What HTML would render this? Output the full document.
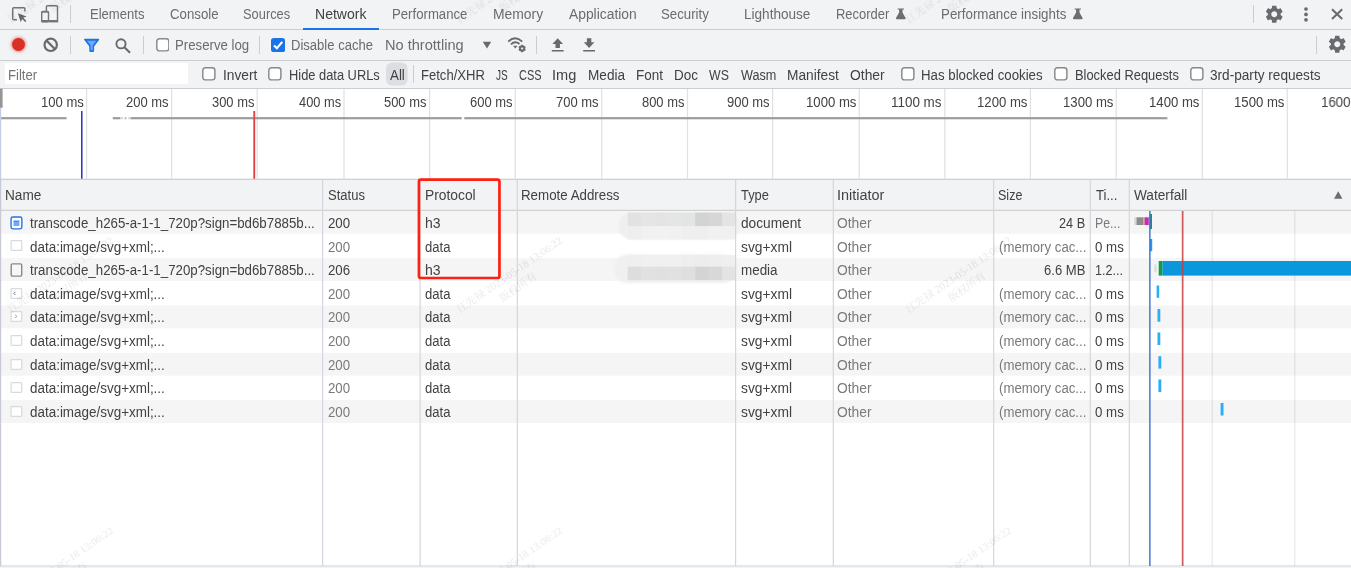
<!DOCTYPE html>
<html lang="en">
<head>
<meta charset="utf-8">
<title>DevTools - Network</title>
<style>
html,body{margin:0;padding:0;}
body{width:1351px;height:568px;position:relative;overflow:hidden;background:#fff;
  font-family:"Liberation Sans",sans-serif;font-size:13.800px;line-height:16px;color:#333;}
.abs,.t,svg,.cb,.vd{position:absolute;}
.t{white-space:pre;line-height:16px;font-size:13.800px;transform-origin:0 50%;}
.bar{position:absolute;left:0;width:1351px;background:#f1f3f4;}
.hl{position:absolute;left:0;width:1351px;height:1px;background:#cbcdd1;}
.vd{width:1px;background:#cbcdd1;}
.cb{width:11px;height:11px;border:1.4px solid #767676;border-radius:3px;background:#fff;}
.row{position:absolute;left:0;width:1351px;background:#f5f5f5;}
.col{position:absolute;width:1px;background:#d4d7dd;}
.g{position:absolute;width:1px;background:#e3e3e3;}
.wf{position:absolute;}
.wm{position:absolute;width:200px;height:30.600px;line-height:15.300px;text-align:center;font-family:"Liberation Serif","Noto Serif CJK SC",serif;font-size:10.700px;color:rgba(0,0,0,.1);transform:rotate(-34.600deg);transform-origin:50% 50%;white-space:nowrap;pointer-events:none;}
</style>
</head>
<body>
<!-- ============ backgrounds ============ -->
<div class="bar" style="top:0;height:29px;"></div>
<div class="hl" style="top:29px;"></div>
<div class="bar" style="top:30px;height:30px;"></div>
<div class="hl" style="top:60px;"></div>
<div class="bar" style="top:61px;height:27px;"></div>
<div class="hl" style="top:88px;"></div>
<!-- ============ table ============ -->
<div class="bar" style="top:179px;height:31px;"></div>
<svg style="left:0;top:0;" width="1351" height="568" viewBox="0 0 1351 568"><rect x="0" y="210.80" width="1351" height="22.85" fill="#f5f5f5"/>
<rect x="0" y="258.14" width="1351" height="22.85" fill="#f5f5f5"/>
<rect x="0" y="305.48" width="1351" height="22.85" fill="#f5f5f5"/>
<rect x="0" y="352.82" width="1351" height="22.85" fill="#f5f5f5"/>
<rect x="0" y="400.16" width="1351" height="22.85" fill="#f5f5f5"/></svg>
<svg style="left:600px;top:205px;" width="145" height="84" viewBox="0 0 145 84">
<defs><filter id="bl" x="-10%" y="-30%" width="120%" height="160%"><feGaussianBlur stdDeviation="1"/></filter>
<filter id="bs" x="-5%" y="-20%" width="110%" height="140%"><feGaussianBlur stdDeviation="0.600"/></filter></defs>
<rect x="18.700" y="7.300" width="120.300" height="27.100" rx="13" fill="#efefef" filter="url(#bl)"/>
<rect x="14" y="49.500" width="123" height="28.500" rx="13.500" fill="#f0f0f0" filter="url(#bl)"/>
<g filter="url(#bs)">
<rect x="27.7" y="7.6" width="13.8" height="13.6" fill="#e2e2e2"/><rect x="41.2" y="7.6" width="13.8" height="13.6" fill="#e5e5e5"/><rect x="54.7" y="7.6" width="13.8" height="13.6" fill="#e4e4e4"/><rect x="68.2" y="7.6" width="13.8" height="13.6" fill="#e5e5e5"/><rect x="81.7" y="7.6" width="13.8" height="13.6" fill="#e3e5e5"/><rect x="95.2" y="7.6" width="13.8" height="13.6" fill="#d3d3d3"/><rect x="108.7" y="7.6" width="13.8" height="13.6" fill="#d6d6d6"/><rect x="122.2" y="7.6" width="13.8" height="13.6" fill="#e4e4e4"/>
<rect x="27.7" y="21.2" width="13.8" height="13.2" fill="#eeeeee"/><rect x="41.2" y="21.2" width="13.8" height="13.2" fill="#f1f1f1"/><rect x="54.7" y="21.2" width="13.8" height="13.2" fill="#f2f2f2"/><rect x="68.2" y="21.2" width="13.8" height="13.2" fill="#f1f1f1"/><rect x="81.7" y="21.2" width="13.8" height="13.2" fill="#efefef"/><rect x="95.2" y="21.2" width="13.8" height="13.2" fill="#eeeeee"/><rect x="108.7" y="21.2" width="13.8" height="13.2" fill="#f1f1f1"/><rect x="122.2" y="21.2" width="13.8" height="13.2" fill="#f0f0f0"/>
<rect x="27.7" y="50" width="13.8" height="11.6" fill="#efefef"/><rect x="41.2" y="50" width="13.8" height="11.6" fill="#f0f0f0"/><rect x="54.7" y="50" width="13.8" height="11.6" fill="#f0f0f0"/><rect x="68.2" y="50" width="13.8" height="11.6" fill="#f0f0f0"/><rect x="81.7" y="50" width="13.8" height="11.6" fill="#eeeeee"/><rect x="95.2" y="50" width="13.8" height="11.6" fill="#ededed"/><rect x="108.7" y="50" width="13.8" height="11.6" fill="#eeeeee"/><rect x="122.2" y="50" width="13.8" height="11.6" fill="#efefef"/>
<rect x="27.7" y="61.6" width="13.8" height="13.6" fill="#dddddd"/><rect x="41.2" y="61.6" width="13.8" height="13.6" fill="#e1e1e1"/><rect x="54.7" y="61.6" width="13.8" height="13.6" fill="#e0e0e0"/><rect x="68.2" y="61.6" width="13.8" height="13.6" fill="#e1e1e1"/><rect x="81.7" y="61.6" width="13.8" height="13.6" fill="#dfdfdf"/><rect x="95.2" y="61.6" width="13.8" height="13.6" fill="#d4d4d4"/><rect x="108.7" y="61.6" width="13.8" height="13.6" fill="#d8d8d8"/><rect x="122.2" y="61.6" width="13.8" height="13.6" fill="#e3e3e3"/>
</g></svg>
<svg style="left:0;top:0;" width="1351" height="568" viewBox="0 0 1351 568"><rect x="0.00" y="178.70" width="1351.00" height="1.20" fill="#cbcdd1"/>
<rect x="0.00" y="209.80" width="1351.00" height="1.10" fill="#cbcdd1"/>
<rect x="86.00" y="89.00" width="1.20" height="89.70" fill="#e0e0e0"/>
<rect x="171.00" y="89.00" width="1.20" height="89.70" fill="#e0e0e0"/>
<rect x="256.60" y="89.00" width="1.20" height="89.70" fill="#e0e0e0"/>
<rect x="343.40" y="89.00" width="1.20" height="89.70" fill="#e0e0e0"/>
<rect x="429.00" y="89.00" width="1.20" height="89.70" fill="#e0e0e0"/>
<rect x="514.60" y="89.00" width="1.20" height="89.70" fill="#e0e0e0"/>
<rect x="601.10" y="89.00" width="1.20" height="89.70" fill="#e0e0e0"/>
<rect x="686.90" y="89.00" width="1.20" height="89.70" fill="#e0e0e0"/>
<rect x="772.00" y="89.00" width="1.20" height="89.70" fill="#e0e0e0"/>
<rect x="858.60" y="89.00" width="1.20" height="89.70" fill="#e0e0e0"/>
<rect x="944.20" y="89.00" width="1.20" height="89.70" fill="#e0e0e0"/>
<rect x="1029.80" y="89.00" width="1.20" height="89.70" fill="#e0e0e0"/>
<rect x="1115.60" y="89.00" width="1.20" height="89.70" fill="#e0e0e0"/>
<rect x="1201.70" y="89.00" width="1.20" height="89.70" fill="#e0e0e0"/>
<rect x="1286.70" y="89.00" width="1.20" height="89.70" fill="#e0e0e0"/>
<rect x="0.00" y="117.10" width="66.60" height="2.20" fill="#9c9c9c"/>
<rect x="112.80" y="117.10" width="7.20" height="2.20" fill="#9c9c9c"/>
<rect x="130.40" y="117.10" width="331.30" height="2.20" fill="#9c9c9c"/>
<rect x="464.30" y="117.10" width="703.10" height="2.20" fill="#9c9c9c"/>
<rect x="120.00" y="117.10" width="3.00" height="2.20" fill="#d8d8d8"/>
<rect x="124.50" y="117.10" width="2.00" height="2.20" fill="#bdbdbd"/>
<rect x="128.00" y="117.10" width="2.40" height="2.20" fill="#dcdcdc"/>
<rect x="0.00" y="88.70" width="2.60" height="19.10" fill="#969696"/>
<rect x="81.00" y="111.00" width="1.55" height="67.70" fill="#3038c0"/>
<rect x="253.30" y="111.00" width="1.90" height="67.70" fill="#e04444"/>
<rect x="1211.60" y="211.00" width="1.20" height="355.00" fill="rgba(0,0,0,.09)"/>
<rect x="1294.20" y="211.00" width="1.20" height="355.00" fill="rgba(0,0,0,.09)"/>
<rect x="322.00" y="180.00" width="1.20" height="386.00" fill="#d3d6dc"/>
<rect x="419.50" y="180.00" width="1.20" height="386.00" fill="#d3d6dc"/>
<rect x="516.70" y="180.00" width="1.20" height="386.00" fill="#d3d6dc"/>
<rect x="735.00" y="180.00" width="1.20" height="386.00" fill="#d3d6dc"/>
<rect x="832.70" y="180.00" width="1.20" height="386.00" fill="#d3d6dc"/>
<rect x="993.10" y="180.00" width="1.20" height="386.00" fill="#d3d6dc"/>
<rect x="1089.70" y="180.00" width="1.20" height="386.00" fill="#d3d6dc"/>
<rect x="1128.70" y="180.00" width="1.20" height="386.00" fill="#d3d6dc"/>
<rect x="0.00" y="108.00" width="1.20" height="71.00" fill="#c2cee6"/>
<rect x="0.00" y="179.00" width="1.20" height="387.00" fill="#c6cad2"/>
<rect x="0.00" y="565.50" width="1351.00" height="1.10" fill="#cbcdd1"/>
<rect x="0.00" y="566.60" width="1351.00" height="1.40" fill="#f1f3f4"/>
<rect x="1134.30" y="217.30" width="2.20" height="7.70" fill="#d8d8d8"/>
<rect x="1136.50" y="217.30" width="6.80" height="7.70" fill="#8c8c8c"/>
<rect x="1143.30" y="217.30" width="1.30" height="7.70" fill="#e8952c"/>
<rect x="1144.60" y="217.30" width="4.20" height="7.70" fill="#c22bc4"/>
<rect x="1149.80" y="214.00" width="2.20" height="15.00" fill="#0f9d48"/>
<rect x="1150.00" y="239.00" width="2.20" height="12.20" fill="#1a9df2"/>
<rect x="1154.30" y="264.40" width="2.20" height="7.80" fill="#dcdcdc"/>
<rect x="1158.70" y="261.00" width="3.80" height="14.60" fill="#0f9d48"/>
<rect x="1162.50" y="261.00" width="188.50" height="14.60" fill="#0b97dc"/>
<rect x="1156.60" y="285.50" width="2.60" height="12.30" fill="#2aaef5"/>
<rect x="1157.50" y="309.00" width="2.80" height="12.70" fill="#2aaef5"/>
<rect x="1157.50" y="332.50" width="2.80" height="12.50" fill="#2aaef5"/>
<rect x="1158.40" y="356.20" width="2.90" height="12.40" fill="#2aaef5"/>
<rect x="1158.40" y="379.50" width="2.90" height="12.50" fill="#2aaef5"/>
<rect x="1220.60" y="403.00" width="2.90" height="12.50" fill="#2aaef5"/>
<rect x="1149.00" y="211.00" width="1.70" height="355.00" fill="rgba(58,116,214,.85)"/>
<rect x="1181.80" y="211.00" width="1.70" height="355.00" fill="rgba(200,64,66,.85)"/>
<rect x="418.950" y="179.600" width="80.500" height="98.400" rx="2" fill="none" stroke="#fc2112" stroke-width="2.700"/>
<path d="M1338.2 191.2L1342.4 198.7H1334Z" fill="#6e6e6e"/></svg>
<svg style="left:9.500px;top:215.500px;" width="13" height="14" viewBox="0 0 13 14"><rect x="1.050" y="0.950" width="10.800" height="11.900" rx="1.800" fill="#fff" stroke="#1a73e8" stroke-width="1.350"/><path d="M3.500 5.200H9.400M3.500 7.100H9.400M3.500 9H9.400" stroke="#4a8bf0" stroke-width="1.500"/></svg>
<svg style="left:9.500px;top:263px;" width="13" height="14" viewBox="0 0 13 14"><rect x="1.200" y="0.9" width="10.500" height="12.200" rx="1.300" fill="#f7f7f7" stroke="#858a91" stroke-width="1.400"/></svg>
<svg style="left:9.500px;top:240.40px;" width="13" height="12" viewBox="0 0 13 12"><rect x="1.100" y="0.700" width="10.600" height="9.600" rx="0.600" fill="#fff" stroke="#d7dbe1" stroke-width="1.250"/></svg>
<svg style="left:9.500px;top:287.74px;" width="13" height="12" viewBox="0 0 13 12"><rect x="1.100" y="0.700" width="10.600" height="9.600" rx="0.600" fill="#fff" stroke="#d7dbe1" stroke-width="1.250"/><path d="M5.400 3.800L3.800 5.400L5.400 7" stroke="#666" stroke-width="0.9" fill="none"/></svg>
<svg style="left:9.500px;top:311.41px;" width="13" height="12" viewBox="0 0 13 12"><rect x="1.100" y="0.700" width="10.600" height="9.600" rx="0.600" fill="#fff" stroke="#d7dbe1" stroke-width="1.250"/><path d="M5.200 3.800L6.800 5.400L5.200 7" stroke="#888" stroke-width="0.9" fill="none"/></svg>
<svg style="left:9.500px;top:335.08px;" width="13" height="12" viewBox="0 0 13 12"><rect x="1.100" y="0.700" width="10.600" height="9.600" rx="0.600" fill="#fff" stroke="#d7dbe1" stroke-width="1.250"/></svg>
<svg style="left:9.500px;top:358.75px;" width="13" height="12" viewBox="0 0 13 12"><rect x="1.100" y="0.700" width="10.600" height="9.600" rx="0.600" fill="#fff" stroke="#d7dbe1" stroke-width="1.250"/></svg>
<svg style="left:9.500px;top:382.42px;" width="13" height="12" viewBox="0 0 13 12"><rect x="1.100" y="0.700" width="10.600" height="9.600" rx="0.600" fill="#fff" stroke="#d7dbe1" stroke-width="1.250"/></svg>
<svg style="left:9.500px;top:406.09px;" width="13" height="12" viewBox="0 0 13 12"><rect x="1.100" y="0.700" width="10.600" height="9.600" rx="0.600" fill="#fff" stroke="#d7dbe1" stroke-width="1.250"/></svg>
<!-- ============ tab bar ============ -->
<div class="abs" style="left:303px;top:28px;width:76px;height:2px;background:#1a73e8;"></div>
<!-- inspect icon -->
<svg style="left:11px;top:6px;" width="17" height="17" viewBox="0 0 17 17" fill="none">
  <path d="M5.900 13.800H2.700Q1.700 13.800 1.700 12.800V2.700Q1.700 1.700 2.700 1.700H12.900Q13.900 1.700 13.900 2.700V5.600" stroke="#72757a" stroke-width="1.500"/>
  <path d="M6.900 7.200L15.600 10.500L12.300 11.800L15.400 14.900L14.200 16.100L11.100 13L9.800 16.200Z" fill="#63666a"/>
</svg>
<!-- device icon -->
<svg style="left:40px;top:4px;" width="19" height="19" viewBox="0 0 19 19" fill="none">
  <path d="M6.4 7V2.6Q6.4 1.7 7.3 1.7H16.6Q17.5 1.7 17.5 2.6V17.6H9.2" stroke="#72757a" stroke-width="1.4"/>
  <rect x="1.7" y="7.4" width="6.8" height="10.4" rx="1" stroke="#72757a" stroke-width="1.4"/>
  <rect x="1.4" y="16" width="16.6" height="2.2" fill="#72757a"/>
  <rect x="1.700" y="7" width="6.800" height="1.700" fill="#72757a"/>
</svg>
<div class="vd" style="left:70px;top:5px;height:18px;"></div>
<!-- flasks -->
<svg style="left:894.800px;top:8px;" width="12" height="12" viewBox="0 0 12 12"><path d="M2.600 0.600H9V1.500H7.500V4.600L10.600 10.100Q11 11.200 9.800 11.200H1.800Q0.600 11.200 1 10.100L4.100 4.600V1.500H2.600Z" fill="#6e6e6e"/></svg>
<svg style="left:1072.200px;top:8px;" width="12" height="12" viewBox="0 0 12 12"><path d="M2.600 0.600H9V1.500H7.500V4.600L10.600 10.100Q11 11.200 9.800 11.200H1.800Q0.600 11.200 1 10.100L4.100 4.600V1.500H2.600Z" fill="#6e6e6e"/></svg>
<div class="vd" style="left:1253px;top:5px;height:18px;"></div>
<!-- gear -->
<svg style="left:1263.700px;top:3.700px;" width="20.500" height="20.500" viewBox="0 0 24 24"><path fill="#676a6e" d="M19.43 12.98c.04-.32.07-.64.07-.98s-.03-.66-.07-.98l2.11-1.65c.19-.15.24-.42.12-.64l-2-3.46c-.12-.22-.39-.3-.61-.22l-2.49 1c-.52-.4-1.08-.73-1.69-.98l-.38-2.65C14.46 2.18 14.25 2 14 2h-4c-.25 0-.46.18-.49.42l-.38 2.65c-.61.25-1.17.59-1.69.98l-2.49-1c-.23-.09-.49 0-.61.22l-2 3.46c-.13.22-.07.49.12.64l2.11 1.65c-.04.32-.07.65-.07.98s.03.66.07.98l-2.11 1.65c-.19.15-.24.42-.12.64l2 3.46c.12.22.39.3.61.22l2.49-1c.52.4 1.08.73 1.69.98l.38 2.65c.03.24.24.42.49.42h4c.25 0 .46-.18.49-.42l.38-2.65c.61-.25 1.17-.59 1.69-.98l2.49 1c.23.09.49 0 .61-.22l2-3.46c.12-.22.07-.49-.12-.64l-2.11-1.65zM12 15.5c-1.93 0-3.500-1.570-3.500-3.500s1.570-3.500 3.500-3.500 3.500 1.570 3.500 3.500-1.570 3.500-3.500 3.500z"/></svg>
<!-- dots -->
<svg style="left:1303px;top:6px;" width="6" height="17" viewBox="0 0 6 17"><circle cx="3" cy="3" r="1.850" fill="#676a6e"/><circle cx="3" cy="8.400" r="1.850" fill="#676a6e"/><circle cx="3" cy="13.800" r="1.850" fill="#676a6e"/></svg>
<!-- close -->
<svg style="left:1330px;top:7px;" width="14" height="14" viewBox="0 0 14 14"><path d="M2 2.200L12.200 12M12.200 2.200L2 12" stroke="#676a6e" stroke-width="2"/></svg>

<!-- ============ toolbar ============ -->
<div class="abs" style="left:11.8px;top:37.6px;width:13.6px;height:13.6px;border-radius:50%;background:#d93025;box-shadow:0 0 3px 1px rgba(217,48,37,.5);"></div>
<svg style="left:42px;top:36px;" width="18" height="18" viewBox="0 0 18 18" fill="none"><circle cx="8.700" cy="8.800" r="6.200" stroke="#676a6e" stroke-width="2.200"/><path d="M4.300 4.400L13.100 13.200" stroke="#676a6e" stroke-width="2.200"/></svg>
<div class="vd" style="left:70px;top:35.500px;height:18px;"></div>
<!-- funnel -->
<svg style="left:83px;top:38px;" width="18" height="15" viewBox="0 0 18 15"><path d="M1.700 0.800H15.500Q16.700 1 16 2.100L11.100 8.500V12.800Q11.100 14 10 14H7.400Q6.300 14 6.300 12.800V8.500L1.300 2.100Q0.600 1 1.700 0.800Z" fill="#1a73e8"/><path d="M3.900 2.700H13.300L9.700 7.600V12.200H7.700V7.600Z" fill="#70a7f4"/></svg>
<!-- search -->
<svg style="left:113.500px;top:36.700px;" width="18" height="18" viewBox="0 0 18 18" fill="none"><circle cx="7" cy="6.8" r="4.6" stroke="#676a6e" stroke-width="1.9"/><path d="M10.4 10.2L16 15.8" stroke="#676a6e" stroke-width="2.1"/></svg>
<div class="vd" style="left:143px;top:35.500px;height:18px;"></div>
<svg style="left:155.75px;top:38.20px;" width="13.7" height="13.7" viewBox="0 0 13.7 13.7"><rect x="0.8" y="0.8" width="12.1" height="12.1" rx="2.6" fill="#fff" stroke="#888" stroke-width="1.450"/></svg>
<div class="vd" style="left:259px;top:35.500px;height:18px;"></div>
<svg style="left:270.750px;top:37.900px;" width="14.200" height="14.200" viewBox="0 0 14.200 14.200"><rect x="0" y="0" width="14.200" height="14.200" rx="2.800" fill="#1a73e8"/><path d="M3 7.400L5.900 10.300L11.300 3.900" stroke="#fff" stroke-width="2.100" fill="none"/></svg>
<svg style="left:482px;top:41px;" width="10" height="8" viewBox="0 0 10 8"><path d="M0.8 0.7H9.2L5 7.6Z" fill="#676a6e"/></svg>
<!-- wifi gear -->
<svg style="left:507px;top:36px;" width="21" height="17" viewBox="0 0 21 17" fill="none">
  <path d="M1.200 5.600Q8.200 -1.200 15.200 5.600" stroke="#676a6e" stroke-width="1.800"/>
  <path d="M3.900 8.400Q8.200 4.300 12.500 8" stroke="#676a6e" stroke-width="1.800"/>
  <path d="M6.100 9.700H10.500L8.300 12.400Z" fill="#676a6e"/>
  <circle cx="15.100" cy="12.500" r="2.300" stroke="#676a6e" stroke-width="1.700"/>
  <path d="M15.100 8.700V16.300M11.800 10.600L18.400 14.400M11.800 14.400L18.400 10.600" stroke="#676a6e" stroke-width="1.600"/>
  <circle cx="15.100" cy="12.500" r="1.100" fill="#f1f3f4"/>
</svg>
<div class="vd" style="left:536px;top:35.500px;height:18px;"></div>
<!-- upload / download -->
<svg style="left:551px;top:37px;" width="14" height="16" viewBox="0 0 14 16"><path d="M6.7 1.2L12 7H8.9V11H4.5V7H1.4Z" fill="#676a6e"/><rect x="0.8" y="13" width="11.8" height="1.5" fill="#676a6e"/></svg>
<svg style="left:582px;top:37px;" width="14" height="16" viewBox="0 0 14 16"><path d="M7.1 11L12.4 5.2H9.3V1.2H4.9V5.2H1.8Z" fill="#676a6e"/><rect x="1.2" y="13" width="11.8" height="1.5" fill="#676a6e"/></svg>
<div class="vd" style="left:1316px;top:35.500px;height:18px;"></div>
<svg style="left:1326.700px;top:34.200px;" width="20.500" height="20.500" viewBox="0 0 24 24"><path fill="#676a6e" d="M19.43 12.98c.04-.32.07-.64.07-.98s-.03-.66-.07-.98l2.11-1.65c.19-.15.24-.42.12-.64l-2-3.46c-.12-.22-.39-.3-.61-.22l-2.49 1c-.52-.4-1.08-.73-1.69-.98l-.38-2.65C14.46 2.18 14.25 2 14 2h-4c-.25 0-.46.18-.49.42l-.38 2.65c-.61.25-1.17.59-1.69.98l-2.49-1c-.23-.09-.49 0-.61.22l-2 3.46c-.13.22-.07.49.12.64l2.11 1.65c-.04.32-.07.65-.07.98s.03.66.07.98l-2.11 1.65c-.19.15-.24.42-.12.64l2 3.46c.12.22.39.3.61.22l2.49-1c.52.4 1.08.73 1.69.98l.38 2.65c.03.24.24.42.49.42h4c.25 0 .46-.18.49-.42l.38-2.65c.61-.25 1.17-.59 1.69-.98l2.49 1c.23.09.49 0 .61-.22l2-3.46c.12-.22.07-.49-.12-.64l-2.11-1.65zM12 15.5c-1.93 0-3.500-1.570-3.500-3.500s1.570-3.500 3.500-3.500 3.500 1.570 3.500 3.500-1.570 3.500-3.500 3.500z"/></svg>

<!-- ============ filter bar ============ -->
<div class="abs" style="left:5px;top:63px;width:183px;height:21px;background:#fff;"></div>
<svg style="left:202.40px;top:67.10px;" width="13.7" height="13.7" viewBox="0 0 13.7 13.7"><rect x="0.8" y="0.8" width="12.1" height="12.1" rx="2.6" fill="#fff" stroke="#888" stroke-width="1.450"/></svg>
<svg style="left:268.05px;top:67.10px;" width="13.7" height="13.7" viewBox="0 0 13.7 13.7"><rect x="0.8" y="0.8" width="12.1" height="12.1" rx="2.6" fill="#fff" stroke="#888" stroke-width="1.450"/></svg>
<svg style="left:385px;top:61px;" width="24" height="26" viewBox="0 0 24 26"><rect x="1" y="1.400" width="21.700" height="23.200" rx="6.300" fill="#dcdee1"/></svg>
<div class="vd" style="left:413px;top:65px;height:18px;"></div>
<svg style="left:901.00px;top:67.10px;" width="13.7" height="13.7" viewBox="0 0 13.7 13.7"><rect x="0.8" y="0.8" width="12.1" height="12.1" rx="2.6" fill="#fff" stroke="#888" stroke-width="1.450"/></svg>
<svg style="left:1054.00px;top:67.10px;" width="13.7" height="13.7" viewBox="0 0 13.7 13.7"><rect x="0.8" y="0.8" width="12.1" height="12.1" rx="2.6" fill="#fff" stroke="#888" stroke-width="1.450"/></svg>
<svg style="left:1190.05px;top:67.10px;" width="13.7" height="13.7" viewBox="0 0 13.7 13.7"><rect x="0.8" y="0.8" width="12.1" height="12.1" rx="2.6" fill="#fff" stroke="#888" stroke-width="1.450"/></svg>

<div id="tx" style="position:absolute;left:0;top:0;width:1351px;height:568px;will-change:transform;">
<span class="t" style="left:90.1px;top:6.8px;color:#696c71;transform:scaleX(0.946);">Elements</span>
<span class="t" style="left:169.8px;top:6.8px;color:#696c71;transform:scaleX(0.960);">Console</span>
<span class="t" style="left:242.9px;top:6.8px;color:#696c71;transform:scaleX(0.932);">Sources</span>
<span class="t" style="left:391.6px;top:6.8px;color:#696c71;transform:scaleX(0.955);">Performance</span>
<span class="t" style="left:492.7px;top:6.8px;color:#696c71;transform:scaleX(1.007);">Memory</span>
<span class="t" style="left:569.2px;top:6.8px;color:#696c71;transform:scaleX(1.003);">Application</span>
<span class="t" style="left:661.3px;top:6.8px;color:#696c71;transform:scaleX(0.959);">Security</span>
<span class="t" style="left:744.4px;top:6.8px;color:#696c71;transform:scaleX(0.983);">Lighthouse</span>
<span class="t" style="left:835.8px;top:6.8px;color:#696c71;transform:scaleX(0.939);">Recorder</span>
<span class="t" style="left:941.4px;top:6.8px;color:#696c71;transform:scaleX(0.967);">Performance insights</span>
<span class="t" style="left:314.8px;top:6.8px;color:#424242;transform:scaleX(1.018);">Network</span>
<span class="t" style="left:175.2px;top:37.8px;color:#696c71;transform:scaleX(0.958);">Preserve log</span>
<span class="t" style="left:291.1px;top:37.8px;color:#696c71;transform:scaleX(0.946);">Disable cache</span>
<span class="t" style="left:384.5px;top:37.8px;color:#696c71;transform:scaleX(1.057);">No throttling</span>
<span class="t" style="left:7.9px;top:67.8px;color:#757575;transform:scaleX(0.953);">Filter</span>
<span class="t" style="left:222.6px;top:67.8px;color:#424242;transform:scaleX(0.998);">Invert</span>
<span class="t" style="left:288.6px;top:67.8px;color:#424242;transform:scaleX(0.932);">Hide data URLs</span>
<span class="t" style="left:390.0px;top:67.8px;color:#424242;transform:scaleX(0.966);">All</span>
<span class="t" style="left:421.3px;top:67.8px;color:#424242;transform:scaleX(0.946);">Fetch/XHR</span>
<span class="t" style="left:496.0px;top:67.8px;color:#424242;transform:scaleX(0.728);">JS</span>
<span class="t" style="left:518.9px;top:67.8px;color:#424242;transform:scaleX(0.796);">CSS</span>
<span class="t" style="left:552.2px;top:67.8px;color:#424242;transform:scaleX(1.055);">Img</span>
<span class="t" style="left:587.5px;top:67.8px;color:#424242;transform:scaleX(0.986);">Media</span>
<span class="t" style="left:635.6px;top:67.8px;color:#424242;transform:scaleX(0.977);">Font</span>
<span class="t" style="left:673.8px;top:67.8px;color:#424242;transform:scaleX(0.978);">Doc</span>
<span class="t" style="left:709.2px;top:67.8px;color:#424242;transform:scaleX(0.893);">WS</span>
<span class="t" style="left:740.5px;top:67.8px;color:#424242;transform:scaleX(0.917);">Wasm</span>
<span class="t" style="left:786.8px;top:67.8px;color:#424242;transform:scaleX(0.994);">Manifest</span>
<span class="t" style="left:849.5px;top:67.8px;color:#424242;transform:scaleX(1.006);">Other</span>
<span class="t" style="left:921.4px;top:67.8px;color:#424242;transform:scaleX(0.961);">Has blocked cookies</span>
<span class="t" style="left:1074.6px;top:67.8px;color:#424242;transform:scaleX(0.934);">Blocked Requests</span>
<span class="t" style="left:1209.7px;top:67.8px;color:#424242;transform:scaleX(0.987);">3rd-party requests</span>
<span class="t" style="left:40.9px;top:94.8px;color:#424242;transform:scaleX(0.946);">100 ms</span>
<span class="t" style="left:126.1px;top:94.8px;color:#424242;transform:scaleX(0.941);">200 ms</span>
<span class="t" style="left:211.9px;top:94.8px;color:#424242;transform:scaleX(0.936);">300 ms</span>
<span class="t" style="left:299.0px;top:94.8px;color:#424242;transform:scaleX(0.930);">400 ms</span>
<span class="t" style="left:384.3px;top:94.8px;color:#424242;transform:scaleX(0.936);">500 ms</span>
<span class="t" style="left:469.7px;top:94.8px;color:#424242;transform:scaleX(0.941);">600 ms</span>
<span class="t" style="left:556.2px;top:94.8px;color:#424242;transform:scaleX(0.941);">700 ms</span>
<span class="t" style="left:642.2px;top:94.8px;color:#424242;transform:scaleX(0.936);">800 ms</span>
<span class="t" style="left:727.1px;top:94.8px;color:#424242;transform:scaleX(0.941);">900 ms</span>
<span class="t" style="left:805.7px;top:94.8px;color:#424242;transform:scaleX(0.953);">1000 ms</span>
<span class="t" style="left:891.3px;top:94.8px;color:#424242;transform:scaleX(0.972);">1100 ms</span>
<span class="t" style="left:976.9px;top:94.8px;color:#424242;transform:scaleX(0.953);">1200 ms</span>
<span class="t" style="left:1062.7px;top:94.8px;color:#424242;transform:scaleX(0.953);">1300 ms</span>
<span class="t" style="left:1148.8px;top:94.8px;color:#424242;transform:scaleX(0.953);">1400 ms</span>
<span class="t" style="left:1233.8px;top:94.8px;color:#424242;transform:scaleX(0.953);">1500 ms</span>
<span class="t" style="left:1321.3px;top:94.8px;color:#424242;transform:scaleX(0.961);">1600 ms</span>
<span class="t" style="left:5.2px;top:187.8px;color:#424242;transform:scaleX(0.987);">Name</span>
<span class="t" style="left:327.7px;top:187.8px;color:#424242;transform:scaleX(0.943);">Status</span>
<span class="t" style="left:424.5px;top:187.8px;color:#424242;transform:scaleX(1.001);">Protocol</span>
<span class="t" style="left:521.2px;top:187.8px;color:#424242;transform:scaleX(0.966);">Remote Address</span>
<span class="t" style="left:741.4px;top:187.8px;color:#424242;transform:scaleX(0.934);">Type</span>
<span class="t" style="left:836.9px;top:187.8px;color:#424242;transform:scaleX(1.047);">Initiator</span>
<span class="t" style="left:998.1px;top:187.8px;color:#424242;transform:scaleX(0.910);">Size</span>
<span class="t" style="left:1095.5px;top:187.8px;color:#424242;transform:scaleX(0.952);">Ti...</span>
<span class="t" style="left:1134.2px;top:187.8px;color:#424242;transform:scaleX(0.989);">Waterfall</span>
<span class="t" style="left:29.8px;top:215.8px;color:#424242;transform:scaleX(0.963);">transcode_h265-a-1-1_720p?sign=bd6b7885b...</span>
<span class="t" style="left:327.7px;top:215.8px;color:#424242;transform:scaleX(0.961);">200</span>
<span class="t" style="left:424.5px;top:215.8px;color:#424242;transform:scaleX(1.018);">h3</span>
<span class="t" style="left:741.0px;top:215.8px;color:#424242;transform:scaleX(0.992);">document</span>
<span class="t" style="left:837.2px;top:215.8px;color:#7a7a7a;transform:scaleX(1.003);">Other</span>
<span class="t" style="left:1059.2px;top:215.8px;color:#424242;transform:scaleX(0.922);">24 B</span>
<span class="t" style="left:1095.0px;top:215.8px;color:#7a7a7a;transform:scaleX(0.895);">Pe...</span>
<span class="t" style="left:29.5px;top:239.8px;color:#424242;transform:scaleX(0.974);">data:image/svg+xml;...</span>
<span class="t" style="left:327.7px;top:239.8px;color:#7a7a7a;transform:scaleX(0.961);">200</span>
<span class="t" style="left:425.0px;top:239.8px;color:#424242;transform:scaleX(0.947);">data</span>
<span class="t" style="left:741.0px;top:239.8px;color:#424242;transform:scaleX(1.000);">svg+xml</span>
<span class="t" style="left:837.2px;top:239.8px;color:#7a7a7a;transform:scaleX(1.003);">Other</span>
<span class="t" style="left:998.6px;top:239.8px;color:#7a7a7a;transform:scaleX(0.958);">(memory cac...</span>
<span class="t" style="left:1095.4px;top:239.8px;color:#424242;transform:scaleX(0.962);">0 ms</span>
<span class="t" style="left:29.8px;top:262.8px;color:#424242;transform:scaleX(0.963);">transcode_h265-a-1-1_720p?sign=bd6b7885b...</span>
<span class="t" style="left:327.7px;top:262.8px;color:#424242;transform:scaleX(0.961);">206</span>
<span class="t" style="left:424.5px;top:262.8px;color:#424242;transform:scaleX(1.018);">h3</span>
<span class="t" style="left:740.5px;top:262.8px;color:#424242;transform:scaleX(0.973);">media</span>
<span class="t" style="left:837.2px;top:262.8px;color:#7a7a7a;transform:scaleX(1.003);">Other</span>
<span class="t" style="left:1044.1px;top:262.8px;color:#424242;transform:scaleX(0.947);">6.6 MB</span>
<span class="t" style="left:1095.0px;top:262.8px;color:#424242;transform:scaleX(0.916);">1.2...</span>
<span class="t" style="left:29.5px;top:286.8px;color:#424242;transform:scaleX(0.974);">data:image/svg+xml;...</span>
<span class="t" style="left:327.7px;top:286.8px;color:#7a7a7a;transform:scaleX(0.961);">200</span>
<span class="t" style="left:425.0px;top:286.8px;color:#424242;transform:scaleX(0.947);">data</span>
<span class="t" style="left:741.0px;top:286.8px;color:#424242;transform:scaleX(1.000);">svg+xml</span>
<span class="t" style="left:837.2px;top:286.8px;color:#7a7a7a;transform:scaleX(1.003);">Other</span>
<span class="t" style="left:998.6px;top:286.8px;color:#7a7a7a;transform:scaleX(0.958);">(memory cac...</span>
<span class="t" style="left:1095.4px;top:286.8px;color:#424242;transform:scaleX(0.962);">0 ms</span>
<span class="t" style="left:29.5px;top:309.8px;color:#424242;transform:scaleX(0.974);">data:image/svg+xml;...</span>
<span class="t" style="left:327.7px;top:309.8px;color:#7a7a7a;transform:scaleX(0.961);">200</span>
<span class="t" style="left:425.0px;top:309.8px;color:#424242;transform:scaleX(0.947);">data</span>
<span class="t" style="left:741.0px;top:309.8px;color:#424242;transform:scaleX(1.000);">svg+xml</span>
<span class="t" style="left:837.2px;top:309.8px;color:#7a7a7a;transform:scaleX(1.003);">Other</span>
<span class="t" style="left:998.6px;top:309.8px;color:#7a7a7a;transform:scaleX(0.958);">(memory cac...</span>
<span class="t" style="left:1095.4px;top:309.8px;color:#424242;transform:scaleX(0.962);">0 ms</span>
<span class="t" style="left:29.5px;top:333.8px;color:#424242;transform:scaleX(0.974);">data:image/svg+xml;...</span>
<span class="t" style="left:327.7px;top:333.8px;color:#7a7a7a;transform:scaleX(0.961);">200</span>
<span class="t" style="left:425.0px;top:333.8px;color:#424242;transform:scaleX(0.947);">data</span>
<span class="t" style="left:741.0px;top:333.8px;color:#424242;transform:scaleX(1.000);">svg+xml</span>
<span class="t" style="left:837.2px;top:333.8px;color:#7a7a7a;transform:scaleX(1.003);">Other</span>
<span class="t" style="left:998.6px;top:333.8px;color:#7a7a7a;transform:scaleX(0.958);">(memory cac...</span>
<span class="t" style="left:1095.4px;top:333.8px;color:#424242;transform:scaleX(0.962);">0 ms</span>
<span class="t" style="left:29.5px;top:357.8px;color:#424242;transform:scaleX(0.974);">data:image/svg+xml;...</span>
<span class="t" style="left:327.7px;top:357.8px;color:#7a7a7a;transform:scaleX(0.961);">200</span>
<span class="t" style="left:425.0px;top:357.8px;color:#424242;transform:scaleX(0.947);">data</span>
<span class="t" style="left:741.0px;top:357.8px;color:#424242;transform:scaleX(1.000);">svg+xml</span>
<span class="t" style="left:837.2px;top:357.8px;color:#7a7a7a;transform:scaleX(1.003);">Other</span>
<span class="t" style="left:998.6px;top:357.8px;color:#7a7a7a;transform:scaleX(0.958);">(memory cac...</span>
<span class="t" style="left:1095.4px;top:357.8px;color:#424242;transform:scaleX(0.962);">0 ms</span>
<span class="t" style="left:29.5px;top:380.8px;color:#424242;transform:scaleX(0.974);">data:image/svg+xml;...</span>
<span class="t" style="left:327.7px;top:380.8px;color:#7a7a7a;transform:scaleX(0.961);">200</span>
<span class="t" style="left:425.0px;top:380.8px;color:#424242;transform:scaleX(0.947);">data</span>
<span class="t" style="left:741.0px;top:380.8px;color:#424242;transform:scaleX(1.000);">svg+xml</span>
<span class="t" style="left:837.2px;top:380.8px;color:#7a7a7a;transform:scaleX(1.003);">Other</span>
<span class="t" style="left:998.6px;top:380.8px;color:#7a7a7a;transform:scaleX(0.958);">(memory cac...</span>
<span class="t" style="left:1095.4px;top:380.8px;color:#424242;transform:scaleX(0.962);">0 ms</span>
<span class="t" style="left:29.5px;top:404.8px;color:#424242;transform:scaleX(0.974);">data:image/svg+xml;...</span>
<span class="t" style="left:327.7px;top:404.8px;color:#7a7a7a;transform:scaleX(0.961);">200</span>
<span class="t" style="left:425.0px;top:404.8px;color:#424242;transform:scaleX(0.947);">data</span>
<span class="t" style="left:741.0px;top:404.8px;color:#424242;transform:scaleX(1.000);">svg+xml</span>
<span class="t" style="left:837.2px;top:404.8px;color:#7a7a7a;transform:scaleX(1.003);">Other</span>
<span class="t" style="left:998.6px;top:404.8px;color:#7a7a7a;transform:scaleX(0.958);">(memory cac...</span>
<span class="t" style="left:1095.4px;top:404.8px;color:#424242;transform:scaleX(0.962);">0 ms</span>
<div class="wm" style="left:-35.30px;top:-23.95px;">江先禄 2023-05-18 13:06:22<br>版权所有</div>
<div class="wm" style="left:413.70px;top:-23.95px;">江先禄 2023-05-18 13:06:22<br>版权所有</div>
<div class="wm" style="left:862.70px;top:-23.95px;">江先禄 2023-05-18 13:06:22<br>版权所有</div>
<div class="wm" style="left:-35.30px;top:266.05px;">江先禄 2023-05-18 13:06:22<br>版权所有</div>
<div class="wm" style="left:413.70px;top:266.05px;">江先禄 2023-05-18 13:06:22<br>版权所有</div>
<div class="wm" style="left:862.70px;top:266.05px;">江先禄 2023-05-18 13:06:22<br>版权所有</div>
<div class="wm" style="left:-35.30px;top:556.05px;">江先禄 2023-05-18 13:06:22<br>版权所有</div>
<div class="wm" style="left:413.70px;top:556.05px;">江先禄 2023-05-18 13:06:22<br>版权所有</div>
<div class="wm" style="left:862.70px;top:556.05px;">江先禄 2023-05-18 13:06:22<br>版权所有</div>
</div>
</body>
</html>
